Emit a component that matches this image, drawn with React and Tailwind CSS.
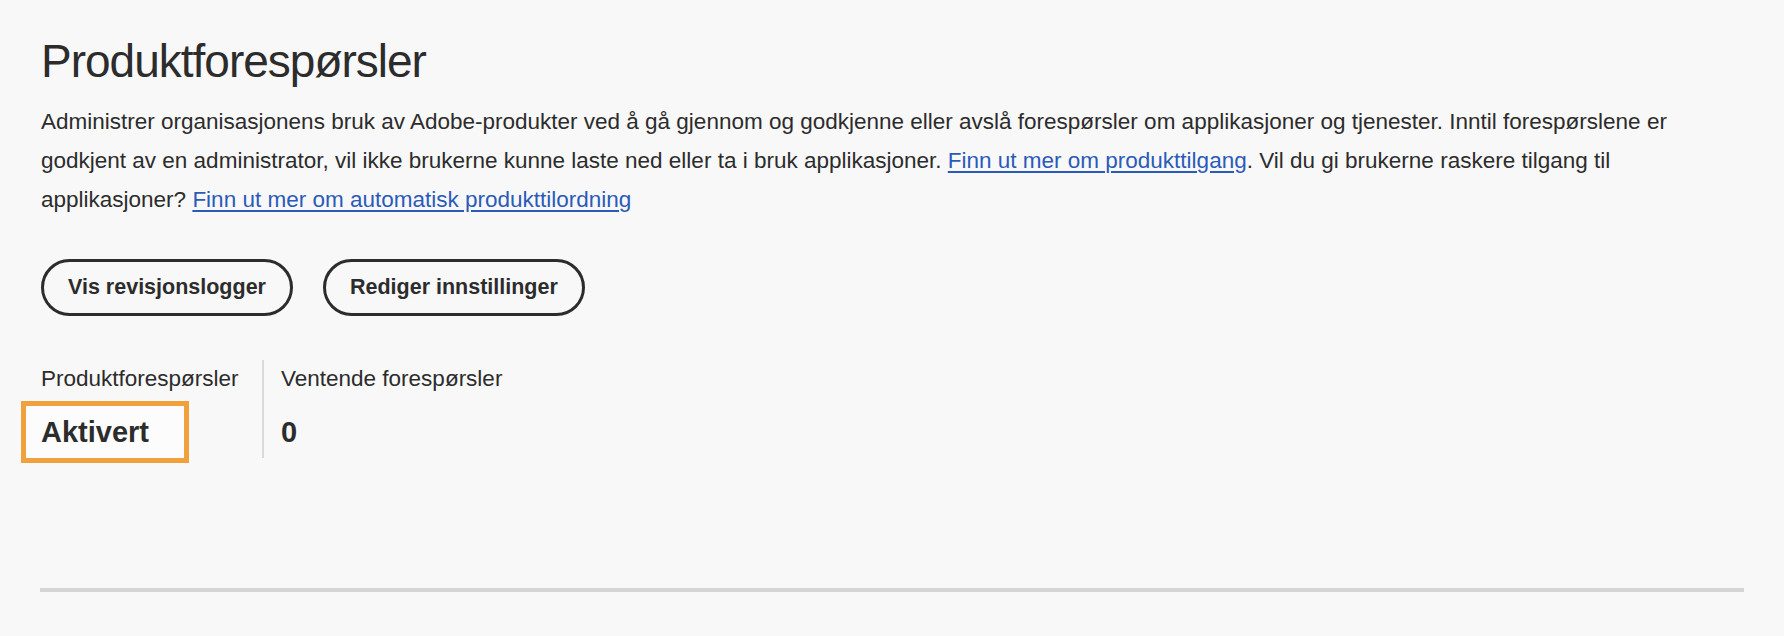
export default function App() {
    return (
        <div className="min-h-screen w-full bg-[#f8f8f8] text-[#2c2c2c] font-['Liberation_Sans',Arial,sans-serif]">
            <div className="pl-[41px] pr-[40px] pt-[33px]">
                <h1 className="text-[46px] leading-[56px] font-light tracking-[-1px]">Produktforespørsler</h1>

                <p className="mt-[13px] text-[22.5px] leading-[39px]">
                    Administrer organisasjonens bruk av Adobe-produkter ved å gå gjennom og godkjenne eller avslå forespørsler om applikasjoner og tjenester. Inntil forespørslene er godkjent av en administrator, vil ikke brukerne kunne laste ned eller ta i bruk applikasjoner.{" "}
                    <a href="#" className="text-[#2b5bb8] underline underline-offset-[3px]">Finn ut mer om produkttilgang</a>. Vil du gi brukerne raskere tilgang til applikasjoner?{" "}
                    <a href="#" className="text-[#2b5bb8] underline underline-offset-[3px]">Finn ut mer om automatisk produkttilordning</a>
                </p>

                {/* Actions */}
                <div className="mt-[40px] flex gap-[30px]">
                    <button className="h-[57px] px-[24px] rounded-full border-[3px] border-[#2c2c2c] text-[21.5px] font-bold">
                        Vis revisjonslogger
                    </button>
                    <button className="h-[57px] px-[24px] rounded-full border-[3px] border-[#2c2c2c] text-[21.5px] font-bold">
                        Rediger innstillinger
                    </button>
                </div>

                {/* Status */}
                <div className="mt-[44px] flex">
                    <div className="w-[221px] pt-[5px] pb-[8px]">
                        <div className="text-[22.5px] leading-[28px]">Produktforespørsler</div>
                        <div className="relative mt-[21px]">
                            <div className="absolute left-[-20px] top-[-13px] w-[168px] h-[62px] border-[5px] border-[#f0a03c] bg-[#fcfcfc]" />
                            <div className="relative text-[29px] leading-[36px] font-bold">Aktivert</div>
                        </div>
                    </div>
                    <div className="border-l-2 border-[#dadada] pl-[17px] pt-[5px] pb-[8px]">
                        <div className="text-[22.5px] leading-[28px]">Ventende forespørsler</div>
                        <div className="mt-[21px] text-[29px] leading-[36px] font-bold">0</div>
                    </div>
                </div>

                <div className="mt-[130px] h-[4px] w-[1704px] ml-[-1px] bg-[#d4d4d4]" />
            </div>
        </div>
    );
}
